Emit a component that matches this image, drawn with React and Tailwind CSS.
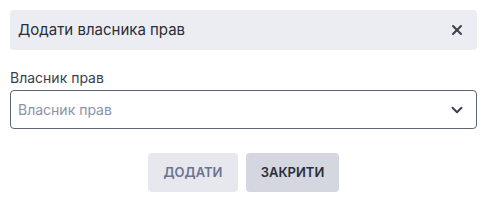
import {X, ChevronDown} from 'lucide-react'

function App() {
  return (
    <div className="w-[487px] h-[211px] bg-white px-[10px] pt-[10px] font-['Inter',sans-serif]">
      <div className="flex items-center justify-between h-[40px] rounded bg-[#ecedf2] pl-[8px] pr-[12px]">
        <span className="text-[15px] text-[#2a2e38]">Додати власника прав</span>
        <X className="w-[16px] h-[16px] text-[#3a3f4b]" strokeWidth={3} />
      </div>
      <div className="mt-[19px] text-[14px] text-[#3a3f4b] leading-[18px]">Власник прав</div>
      <div className="mt-[3px] flex items-center justify-between h-[39px] rounded border border-[#5f6575] pl-[7px] pr-[10px]">
        <span className="text-[14px] text-[#8a92a8]">Власник прав</span>
        <ChevronDown className="w-[18px] h-[18px] text-[#3a3f4b]" strokeWidth={2.5} />
      </div>
      <div className="mt-[24px] flex justify-center gap-[8px]">
        <button className="w-[90px] h-[39px] rounded bg-[#e7e8ee] text-[13px] font-semibold text-[#6b7390]">ДОДАТИ</button>
        <button className="w-[93px] h-[39px] rounded bg-[#d4d7e0] text-[13px] font-semibold text-[#2a2e38]">ЗАКРИТИ</button>
      </div>
    </div>
  )
}

export default App
